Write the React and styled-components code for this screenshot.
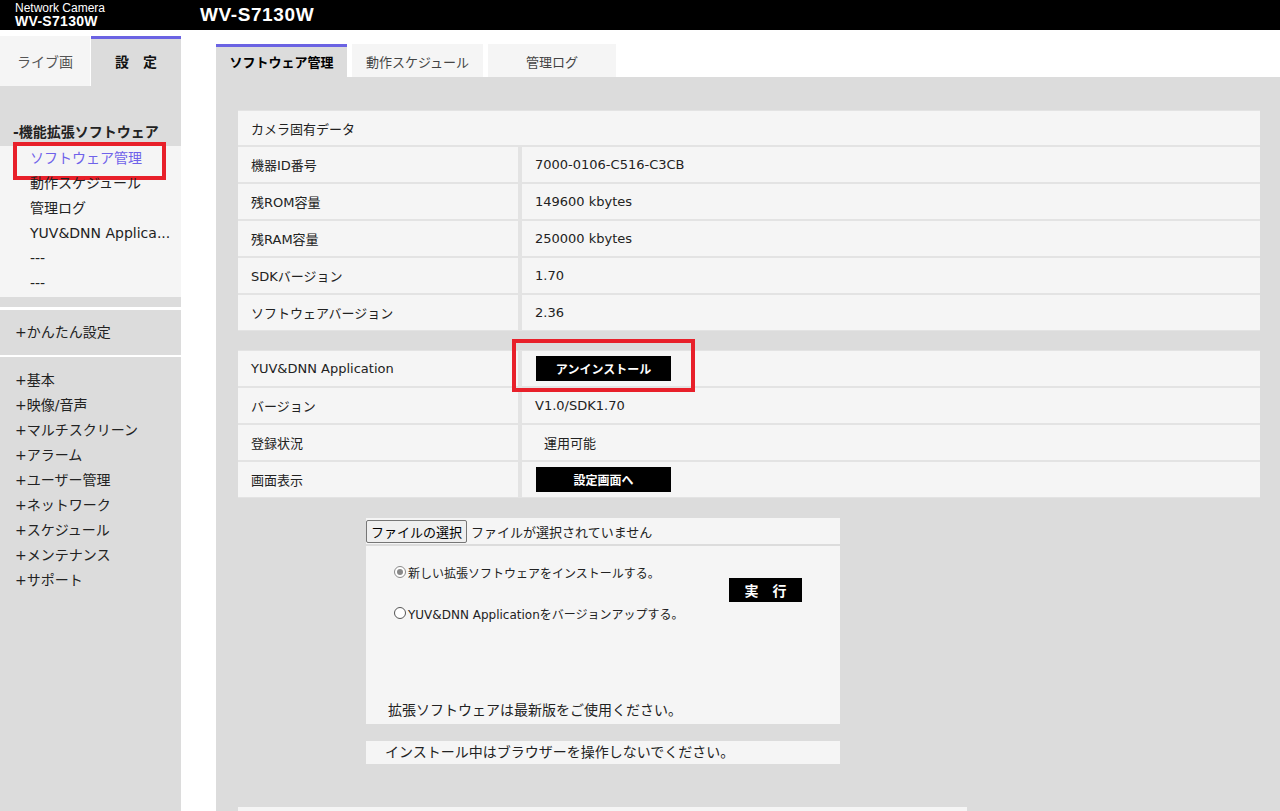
import styled, { createGlobalStyle } from "styled-components";

const GlobalStyle = createGlobalStyle`
  html, body {
    margin: 0;
    padding: 0;
    background: #fff;
  }
  body {
    font-family: "DejaVu Sans", "Noto Sans CJK JP", sans-serif;
    color: #222;
    overflow: hidden;
  }
`;

const PURPLE = "#6b63e3";
const GREY = "#dcdcdc";
const LIGHT = "#f5f5f5";

const Page = styled.div`
  width: 1280px;
  height: 811px;
  display: flex;
  flex-direction: column;
  overflow: hidden;
`;

const Header = styled.header`
  flex: none;
  height: 30px;
  background: #000;
  color: #fff;
  display: flex;
  font-family: "Liberation Sans", Arial, sans-serif;
`;

const Brand = styled.div`
  width: 200px;
  box-sizing: border-box;
  padding: 1px 0 0 15px;
  display: flex;
  flex-direction: column;
  justify-content: center;
`;

const BrandSub = styled.div`
  font-size: 12px;
  line-height: 12px;
`;

const BrandName = styled.div`
  font-size: 14px;
  font-weight: bold;
  line-height: 15px;
  letter-spacing: 0.3px;
`;

const Title = styled.h1`
  margin: 0;
  font-size: 19px;
  font-weight: bold;
  line-height: 30px;
  letter-spacing: 0.6px;
`;

const Body = styled.div`
  flex: 1;
  min-height: 0;
  display: flex;
  padding-top: 6px;
`;

const Sidebar = styled.aside`
  width: 181px;
  flex: none;
  display: flex;
  flex-direction: column;
`;

const SideTabs = styled.div`
  display: flex;
  gap: 1px;
  height: 50px;
  flex: none;
`;

const SideTab = styled.div`
  flex: 1;
  box-sizing: border-box;
  display: flex;
  align-items: center;
  justify-content: center;
  padding-bottom: 4px;
  font-size: 14px;
  background: ${(p) => (p.$active ? GREY : LIGHT)};
  border-top: 3px solid ${(p) => (p.$active ? PURPLE : LIGHT)};
  color: ${(p) => (p.$active ? "#111" : "#555")};
  font-weight: ${(p) => (p.$active ? "bold" : "normal")};
`;

const SideNav = styled.nav`
  flex: 1;
  background: ${GREY};
  display: flex;
  flex-direction: column;
`;

const ExtSection = styled.div`
  padding: 36px 0 10px;
`;

const SectionTitle = styled.div`
  font-size: 14px;
  font-weight: bold;
  line-height: 20px;
  padding-left: 13px;
  margin-bottom: 4px;
`;

const SubMenu = styled.ul`
  list-style: none;
  margin: 0;
  padding: 0 0 1px;
  background: ${LIGHT};
`;

const SubItem = styled.li`
  position: relative;
  font-size: 14px;
  line-height: 25px;
  padding-left: 30px;
  white-space: nowrap;
  color: ${(p) => (p.$active ? "#6f62ea" : "#222")};
`;

const Callout = styled.span`
  position: absolute;
  inset: ${(p) => p.$inset};
  border: 4px solid #e8202a;
  pointer-events: none;
`;

const NavGroup = styled.ul`
  list-style: none;
  margin: 0;
  padding: ${(p) => p.$pad};
  border-top: ${(p) => p.$line}px solid #fff;
`;

const NavItem = styled.li`
  font-size: 14px;
  line-height: 25px;
  padding-left: 15px;
  white-space: nowrap;
`;

const Main = styled.main`
  flex: 1;
  min-width: 0;
  margin: 8px 0 0 35px;
  display: flex;
  flex-direction: column;
`;

const MainTabs = styled.div`
  flex: none;
  display: flex;
  gap: 5px;
  height: 33px;
`;

const MainTab = styled.div`
  width: ${(p) => p.$w}px;
  box-sizing: border-box;
  display: flex;
  align-items: center;
  justify-content: center;
  padding-bottom: 2px;
  font-size: 13px;
  background: ${(p) => (p.$active ? GREY : LIGHT)};
  border-top: 3px solid ${(p) => (p.$active ? PURPLE : LIGHT)};
  color: ${(p) => (p.$active ? "#000" : "#444")};
  font-weight: ${(p) => (p.$active ? 600 : "normal")};
`;

const Panel = styled.section`
  flex: 1;
  min-height: 0;
  background: ${GREY};
  padding: 33px 20px 0 22px;
  overflow: hidden;
`;

const InfoTable = styled.div`
  display: grid;
  grid-template-columns: 280px 1fr;
  column-gap: 4px;
  row-gap: 2px;
  padding: 1px 0;
  background: #e3e3e3;
  margin-top: ${(p) => p.$top || 0}px;
`;

const Cell = styled.div`
  grid-column: ${(p) => (p.$full ? "1 / -1" : "auto")};
  height: ${(p) => (p.$full ? 34 : 35)}px;
  background: ${LIGHT};
  display: flex;
  align-items: center;
  padding-left: ${(p) => p.$indent || 13}px;
  font-size: 13px;
  white-space: nowrap;
`;

const ButtonWrap = styled.span`
  position: relative;
  display: inline-flex;
`;

const BlackButton = styled.button`
  border: none;
  background: #000;
  color: #fff;
  font-family: inherit;
  font-weight: bold;
  font-size: ${(p) => p.$size || 12}px;
  width: ${(p) => p.$w || 135}px;
  height: ${(p) => p.$h || 25}px;
  margin-top: ${(p) => p.$top || 0}px;
  padding: 0;
  display: flex;
  align-items: center;
  justify-content: center;
  cursor: pointer;
`;

const Upload = styled.div`
  margin: 20px 0 0 128px;
  width: 474px;
`;

const FileRow = styled.div`
  height: 26px;
  background: ${LIGHT};
  display: flex;
  align-items: center;
`;

const FileButton = styled.button`
  height: 23px;
  box-sizing: border-box;
  padding: 0 4px;
  font-family: inherit;
  font-size: 13px;
  color: #000;
  background: #efefef;
  border: 1px solid #767676;
  border-radius: 2px;
`;

const FileStatus = styled.span`
  margin-left: 4px;
  font-size: 13px;
`;

const OptionBox = styled.div`
  margin-top: 2px;
  height: 178px;
  box-sizing: border-box;
  background: ${LIGHT};
  padding: 16px 0 4px 22px;
  display: flex;
  flex-direction: column;
`;

const OptionRow = styled.div`
  display: flex;
  align-items: flex-start;
`;

const RadioList = styled.div`
  width: 341px;
  display: flex;
  flex-direction: column;
  gap: 21px;
  padding-left: 6px;
  box-sizing: border-box;
`;

const RadioLine = styled.label`
  display: flex;
  align-items: center;
  gap: 2px;
  height: 20px;
  font-size: 12px;
  white-space: nowrap;
`;

const Radio = styled.span`
  width: 12px;
  height: 12px;
  box-sizing: border-box;
  border-radius: 50%;
  border: 1px solid ${(p) => (p.$checked ? "#8a8a8a" : "#555")};
  background: #fff;
  display: flex;
  align-items: center;
  justify-content: center;
  &::after {
    content: "";
    width: 6px;
    height: 6px;
    border-radius: 50%;
    background: ${(p) => (p.$checked ? "#888" : "transparent")};
  }
`;

const Notice = styled.div`
  margin-top: auto;
  font-size: 14px;
  line-height: 20px;
`;

const InstallNote = styled.div`
  margin: 17px 0 0 128px;
  width: 474px;
  height: 23px;
  box-sizing: border-box;
  background: ${LIGHT};
  padding-left: 19px;
  font-size: 14px;
  line-height: 23px;
`;

const NextBlock = styled.div`
  margin-top: 43px;
  width: 729px;
  height: 30px;
  background: ${LIGHT};
`;

const cameraRows = [
  ["機器ID番号", "7000-0106-C516-C3CB"],
  ["残ROM容量", "149600 kbytes"],
  ["残RAM容量", "250000 kbytes"],
  ["SDKバージョン", "1.70"],
  ["ソフトウェアバージョン", "2.36"],
];

const subMenu = [
  "ソフトウェア管理",
  "動作スケジュール",
  "管理ログ",
  "YUV&DNN Applica...",
  "---",
  "---",
];

const mainMenu = [
  "+基本",
  "+映像/音声",
  "+マルチスクリーン",
  "+アラーム",
  "+ユーザー管理",
  "+ネットワーク",
  "+スケジュール",
  "+メンテナンス",
  "+サポート",
];

const tabs = [
  { label: "ソフトウェア管理", w: 131, active: true },
  { label: "動作スケジュール", w: 131 },
  { label: "管理ログ", w: 128 },
];

export default function App() {
  return (
    <Page>
      <GlobalStyle />
      <Header>
        <Brand>
          <BrandSub>Network Camera</BrandSub>
          <BrandName>WV-S7130W</BrandName>
        </Brand>
        <Title>WV-S7130W</Title>
      </Header>
      <Body>
        <Sidebar>
          <SideTabs>
            <SideTab>ライブ画</SideTab>
            <SideTab $active>設　定</SideTab>
          </SideTabs>
          <SideNav>
            <ExtSection>
              <SectionTitle>-機能拡張ソフトウェア</SectionTitle>
              <SubMenu>
                {subMenu.map((item, i) => (
                  <SubItem key={i} $active={i === 0}>
                    {item}
                    {i === 0 && <Callout $inset="-4px 15px -9px 13px" />}
                  </SubItem>
                ))}
              </SubMenu>
            </ExtSection>
            <NavGroup $line={3} $pad="10px 0">
              <NavItem>+かんたん設定</NavItem>
            </NavGroup>
            <NavGroup $line={2} $pad="11px 0 0">
              {mainMenu.map((item) => (
                <NavItem key={item}>{item}</NavItem>
              ))}
            </NavGroup>
          </SideNav>
        </Sidebar>
        <Main>
          <MainTabs>
            {tabs.map((t) => (
              <MainTab key={t.label} $w={t.w} $active={t.active}>
                {t.label}
              </MainTab>
            ))}
          </MainTabs>
          <Panel>
            <InfoTable>
              <Cell $full>カメラ固有データ</Cell>
              {cameraRows.flatMap(([k, v]) => [
                <Cell key={k}>{k}</Cell>,
                <Cell key={k + "-v"}>{v}</Cell>,
              ])}
            </InfoTable>
            <InfoTable $top={19}>
              <Cell>YUV&amp;DNN Application</Cell>
              <Cell $indent={14}>
                <ButtonWrap>
                  <BlackButton>アンインストール</BlackButton>
                  <Callout $inset="-17px -24px -11px -24px" />
                </ButtonWrap>
              </Cell>
              <Cell>バージョン</Cell>
              <Cell>V1.0/SDK1.70</Cell>
              <Cell>登録状況</Cell>
              <Cell $indent={22}>運用可能</Cell>
              <Cell>画面表示</Cell>
              <Cell $indent={14}>
                <BlackButton>設定画面へ</BlackButton>
              </Cell>
            </InfoTable>
            <Upload>
              <FileRow>
                <FileButton>ファイルの選択</FileButton>
                <FileStatus>ファイルが選択されていません</FileStatus>
              </FileRow>
              <OptionBox>
                <OptionRow>
                  <RadioList>
                    <RadioLine>
                      <Radio $checked />
                      新しい拡張ソフトウェアをインストールする。
                    </RadioLine>
                    <RadioLine>
                      <Radio />
                      YUV&amp;DNN Applicationをバージョンアップする。
                    </RadioLine>
                  </RadioList>
                  <BlackButton $w={73} $h={24} $size={14} $top={16}>
                    実　行
                  </BlackButton>
                </OptionRow>
                <Notice>拡張ソフトウェアは最新版をご使用ください。</Notice>
              </OptionBox>
            </Upload>
            <InstallNote>インストール中はブラウザーを操作しないでください。</InstallNote>
            <NextBlock />
          </Panel>
        </Main>
      </Body>
    </Page>
  );
}
